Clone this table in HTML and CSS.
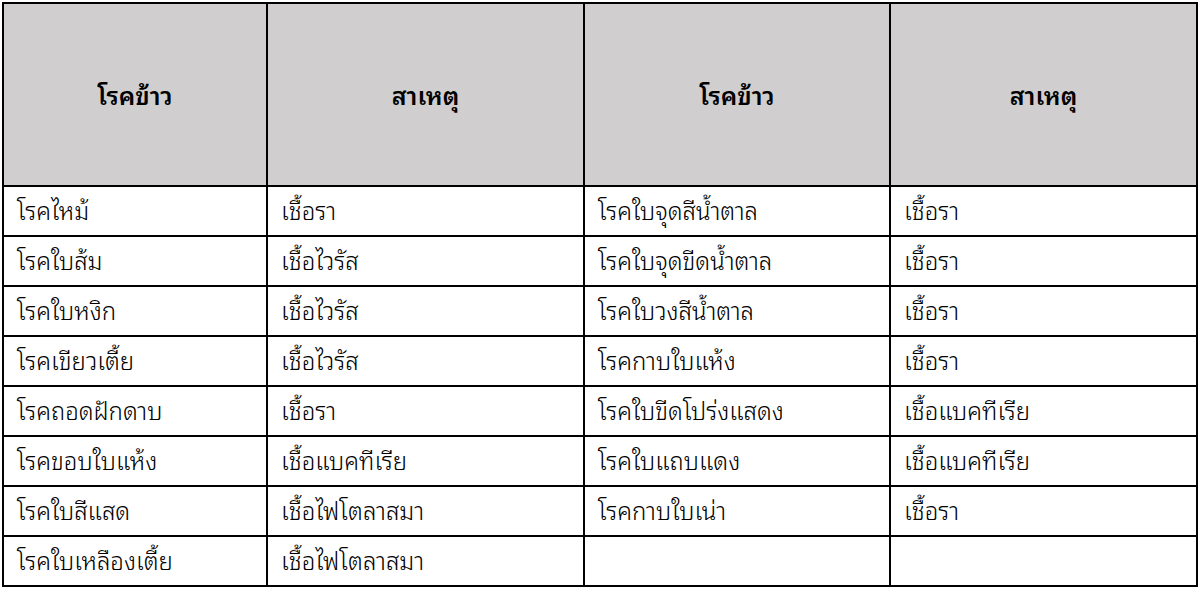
FILE: index.html
```html
<!DOCTYPE html>
<html lang="th">
<head>
<meta charset="utf-8">
<title>โรคข้าว</title>
<link rel="stylesheet" href="styles.css">
</head>
<body>
<table class="disease-table">
  <colgroup>
    <col class="c1"><col class="c2"><col class="c3"><col class="c4">
  </colgroup>
  <thead>
    <tr><th>โรคข้าว</th><th>สาเหตุ</th><th>โรคข้าว</th><th>สาเหตุ</th></tr>
  </thead>
  <tbody>
    <tr><td>โรคไหม้</td><td>เชื้อรา</td><td>โรคใบจุดสีน้ำตาล</td><td>เชื้อรา</td></tr>
    <tr><td>โรคใบส้ม</td><td>เชื้อไวรัส</td><td>โรคใบจุดขีดน้ำตาล</td><td>เชื้อรา</td></tr>
    <tr><td>โรคใบหงิก</td><td>เชื้อไวรัส</td><td>โรคใบวงสีน้ำตาล</td><td>เชื้อรา</td></tr>
    <tr><td>โรคเขียวเตี้ย</td><td>เชื้อไวรัส</td><td>โรคกาบใบแห้ง</td><td>เชื้อรา</td></tr>
    <tr><td>โรคถอดฝักดาบ</td><td>เชื้อรา</td><td>โรคใบขีดโปร่งแสดง</td><td>เชื้อแบคทีเรีย</td></tr>
    <tr><td>โรคขอบใบแห้ง</td><td>เชื้อแบคทีเรีย</td><td>โรคใบแถบแดง</td><td>เชื้อแบคทีเรีย</td></tr>
    <tr><td>โรคใบสีแสด</td><td>เชื้อไฟโตลาสมา</td><td>โรคกาบใบเน่า</td><td>เชื้อรา</td></tr>
    <tr><td>โรคใบเหลืองเตี้ย</td><td>เชื้อไฟโตลาสมา</td><td></td><td></td></tr>
  </tbody>
</table>
</body>
</html>
```

FILE: styles.css
```css
html, body {
  margin: 0;
  padding: 0;
  background: #ffffff;
}
body {
  padding: 2px 0 0 2px;
  font-family: "Noto Sans Thai Looped", "Noto Looped Thai", "Loma", "Garuda", "Sarabun", "Tahoma", "Noto Sans Thai", "Noto Sans", sans-serif;
  color: #000;
}
.disease-table {
  border-collapse: collapse;
  table-layout: fixed;
  width: 1196px;
}
.c1 { width: 264px; }
.c2 { width: 317px; }
.c3 { width: 306px; }
.c4 { width: 307px; }
.disease-table th,
.disease-table td {
  border: 2px solid #000;
  padding: 0;
  line-height: 30px;
}
.disease-table th {
  background: #d0cece;
  height: 179px;
  font-weight: 600;
  font-size: 25px;
  text-align: center;
  vertical-align: middle;
  padding-bottom: 2px;
}
.disease-table td {
  height: 44px;
  font-size: 24px;
  font-weight: 300;
  text-align: left;
  vertical-align: middle;
  padding: 0 0 4px 13px;
}
```
